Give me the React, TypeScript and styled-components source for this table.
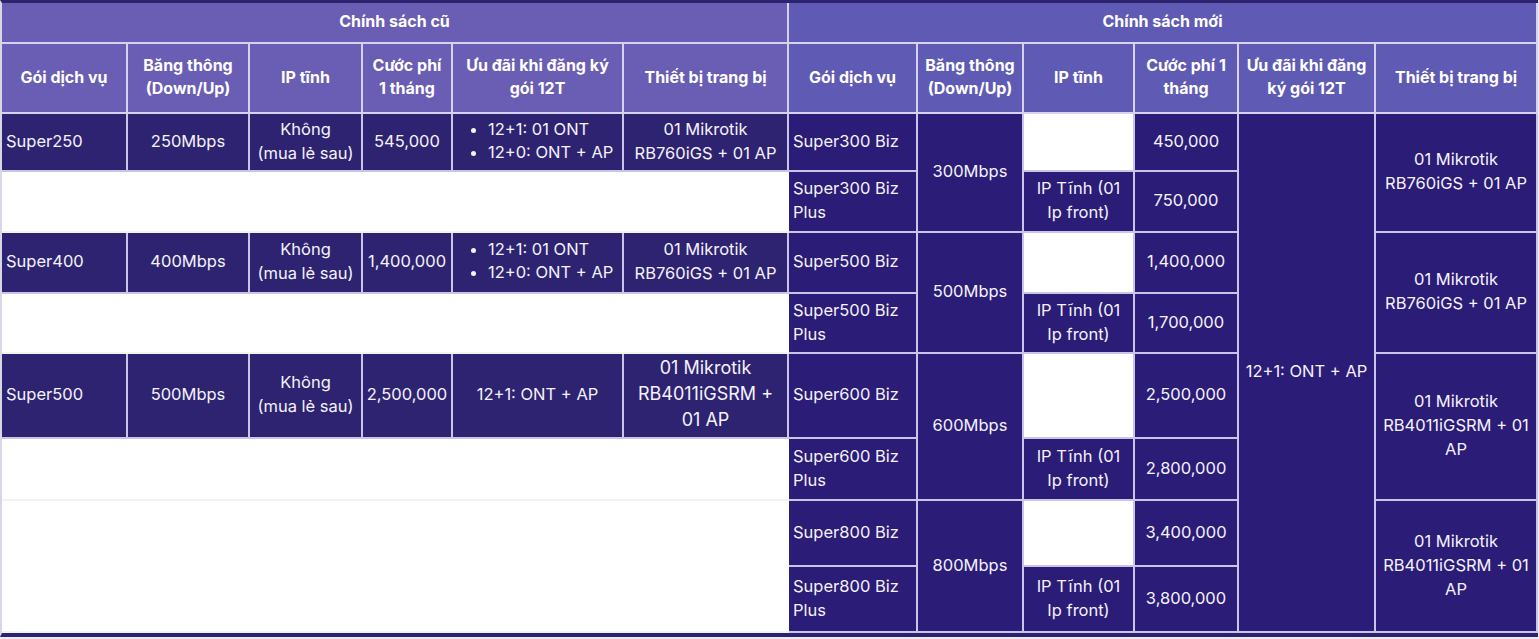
import React from 'react';
import styled, { createGlobalStyle } from 'styled-components';

type Side = 'old' | 'new';

const GlobalStyle = createGlobalStyle`
  html, body {
    margin: 0;
    padding: 0;
    background: #ecebf2;
  }
  body {
    font-family: Inter, "Noto Sans", "Liberation Sans", sans-serif;
    color: #ffffff;
  }
`;

const oldHead = ['Gói dịch vụ', 'Băng thông|(Down/Up)', 'IP tĩnh', 'Cước phí|1 tháng', 'Ưu đãi khi đăng ký|gói 12T', 'Thiết bị trang bị'];
const newHead = ['Gói dịch vụ', 'Băng thông|(Down/Up)', 'IP tĩnh', 'Cước phí 1|tháng', 'Ưu đãi khi đăng|ký gói 12T', 'Thiết bị trang bị'];

const lines = (text: string) =>
  text.split('|').map((part, i, all) => (
    <React.Fragment key={i}>
      {part}
      {i < all.length - 1 && <br />}
    </React.Fragment>
  ));

const App: React.FC = () => {
  return (
    <>
      <GlobalStyle />
      <Table>
        <GroupHead $side="old" $colSpan={6}>Chính sách cũ</GroupHead>
        <GroupHead $side="new" $colSpan={6}>Chính sách mới</GroupHead>

        {oldHead.map((h, i) => (
          <HeadCell key={'o' + i} $side="old">{lines(h)}</HeadCell>
        ))}
        {newHead.map((h, i) => (
          <HeadCell key={'n' + i} $side="new">{lines(h)}</HeadCell>
        ))}

        {/* row 1 */}
        <Cell $side="old" $align="left">Super250</Cell>
        <Cell $side="old">250Mbps</Cell>
        <Cell $side="old">{lines('Không|(mua lẻ sau)')}</Cell>
        <Cell $side="old">545,000</Cell>
        <Cell $side="old" $align="left">
          <Bullets>
            <li>12+1: 01 ONT</li>
            <li>12+0: ONT + AP</li>
          </Bullets>
        </Cell>
        <Cell $side="old">{lines('01 Mikrotik|RB760iGS + 01 AP')}</Cell>

        <Cell $side="new" $align="left">Super300 Biz</Cell>
        <Cell $side="new" $rowSpan={2}>300Mbps</Cell>
        <Blank />
        <Cell $side="new">450,000</Cell>
        <Cell $side="new" $rowSpan={8}>12+1: ONT + AP</Cell>
        <Cell $side="new" $rowSpan={2}>{lines('01 Mikrotik|RB760iGS + 01 AP')}</Cell>

        {/* row 2 */}
        <Filler $colSpan={6} />
        <Cell $side="new" $align="left">{lines('Super300 Biz|Plus')}</Cell>
        <Cell $side="new">{lines('IP Tĩnh (01|Ip front)')}</Cell>
        <Cell $side="new">750,000</Cell>

        {/* row 3 */}
        <Cell $side="old" $align="left">Super400</Cell>
        <Cell $side="old">400Mbps</Cell>
        <Cell $side="old">{lines('Không|(mua lẻ sau)')}</Cell>
        <Cell $side="old">1,400,000</Cell>
        <Cell $side="old" $align="left">
          <Bullets>
            <li>12+1: 01 ONT</li>
            <li>12+0: ONT + AP</li>
          </Bullets>
        </Cell>
        <Cell $side="old">{lines('01 Mikrotik|RB760iGS + 01 AP')}</Cell>

        <Cell $side="new" $align="left">Super500 Biz</Cell>
        <Cell $side="new" $rowSpan={2}>500Mbps</Cell>
        <Blank />
        <Cell $side="new">1,400,000</Cell>
        <Cell $side="new" $rowSpan={2}>{lines('01 Mikrotik|RB760iGS + 01 AP')}</Cell>

        {/* row 4 */}
        <Filler $colSpan={6} />
        <Cell $side="new" $align="left">{lines('Super500 Biz|Plus')}</Cell>
        <Cell $side="new">{lines('IP Tĩnh (01|Ip front)')}</Cell>
        <Cell $side="new">1,700,000</Cell>

        {/* row 5 */}
        <Cell $side="old" $align="left">Super500</Cell>
        <Cell $side="old">500Mbps</Cell>
        <Cell $side="old">{lines('Không|(mua lẻ sau)')}</Cell>
        <Cell $side="old">2,500,000</Cell>
        <Cell $side="old">12+1: ONT + AP</Cell>
        <Cell $side="old" $big>{lines('01 Mikrotik|RB4011iGSRM +|01 AP')}</Cell>

        <Cell $side="new" $align="left">Super600 Biz</Cell>
        <Cell $side="new" $rowSpan={2}>600Mbps</Cell>
        <Blank />
        <Cell $side="new">2,500,000</Cell>
        <Cell $side="new" $rowSpan={2}>{lines('01 Mikrotik|RB4011iGSRM + 01|AP')}</Cell>

        {/* row 6 */}
        <Filler $colSpan={6} />
        <Cell $side="new" $align="left">{lines('Super600 Biz|Plus')}</Cell>
        <Cell $side="new">{lines('IP Tĩnh (01|Ip front)')}</Cell>
        <Cell $side="new">2,800,000</Cell>

        {/* row 7 */}
        <Filler $colSpan={6} $rowSpan={2} />
        <Cell $side="new" $align="left">Super800 Biz</Cell>
        <Cell $side="new" $rowSpan={2}>800Mbps</Cell>
        <Blank />
        <Cell $side="new">3,400,000</Cell>
        <Cell $side="new" $rowSpan={2}>{lines('01 Mikrotik|RB4011iGSRM + 01|AP')}</Cell>

        {/* row 8 */}
        <Cell $side="new" $align="left">{lines('Super800 Biz|Plus')}</Cell>
        <Cell $side="new">{lines('IP Tĩnh (01|Ip front)')}</Cell>
        <Cell $side="new">3,800,000</Cell>
      </Table>
    </>
  );
};

const Table = styled.div`
  display: grid;
  grid-template-columns: 126px 122px 113px 90px 171px 165px 129px 106px 111px 104px 137px 162px;
  grid-template-rows: 41px 70px 58px 61px 61px 60px 85px 62px 66px 66px;
  width: max-content;
  background: #ffffff;
  border-top: 3px solid #2c236f;
  border-left: 2px solid #d9d7e6;
  border-bottom: 4px solid #2c236f;
`;

const headBg = (side: Side) => (side === 'old' ? '#6a5db4' : '#5f5bb5');
const bodyBg = (side: Side) => (side === 'old' ? '#2e2371' : '#2b1c77');

const GroupHead = styled.div<{ $side: Side; $colSpan: number }>`
  grid-column: span ${p => p.$colSpan};
  display: flex;
  align-items: center;
  justify-content: center;
  background: ${p => headBg(p.$side)};
  border-right: 2px solid #d6d2ee;
  border-bottom: 2px solid #d6d2ee;
  font-size: 16px;
  font-weight: 700;
  padding-bottom: 3px;
`;

const HeadCell = styled.div<{ $side: Side }>`
  display: flex;
  align-items: center;
  justify-content: center;
  text-align: center;
  background: ${p => headBg(p.$side)};
  border-right: 2px solid #d6d2ee;
  border-bottom: 2px solid #d6d2ee;
  font-size: 16px;
  font-weight: 700;
  line-height: 23px;
  padding: 0 1px 2px;
  white-space: nowrap;
`;

const Cell = styled.div<{ $side: Side; $align?: 'left' | 'center'; $rowSpan?: number; $big?: boolean }>`
  grid-row: span ${p => p.$rowSpan ?? 1};
  display: flex;
  align-items: center;
  justify-content: ${p => (p.$align === 'left' ? 'flex-start' : 'center')};
  text-align: ${p => p.$align ?? 'center'};
  background: ${p => bodyBg(p.$side)};
  border-right: 2px solid #c9c4ea;
  border-bottom: 2px solid #c9c4ea;
  font-size: ${p => (p.$big ? '18px' : '16.5px')};
  line-height: ${p => (p.$big ? '26px' : '24px')};
  padding: 0 ${p => (p.$align === 'left' ? '4px' : '0')} 3px;
  color: #f4f2fb;
  white-space: nowrap;
`;

const Blank = styled.div`
  background: #ffffff;
  border-right: 2px solid #c9c4ea;
  border-bottom: 2px solid #c9c4ea;
`;

const Filler = styled.div<{ $colSpan: number; $rowSpan?: number }>`
  grid-column: span ${p => p.$colSpan};
  grid-row: span ${p => p.$rowSpan ?? 1};
  background: #ffffff;
  border-bottom: 2px solid #f3f3f6;
`;

const Bullets = styled.ul`
  margin: 0;
  padding-left: 31px;
  list-style: disc;
  line-height: 23px;
`;

export default App;
